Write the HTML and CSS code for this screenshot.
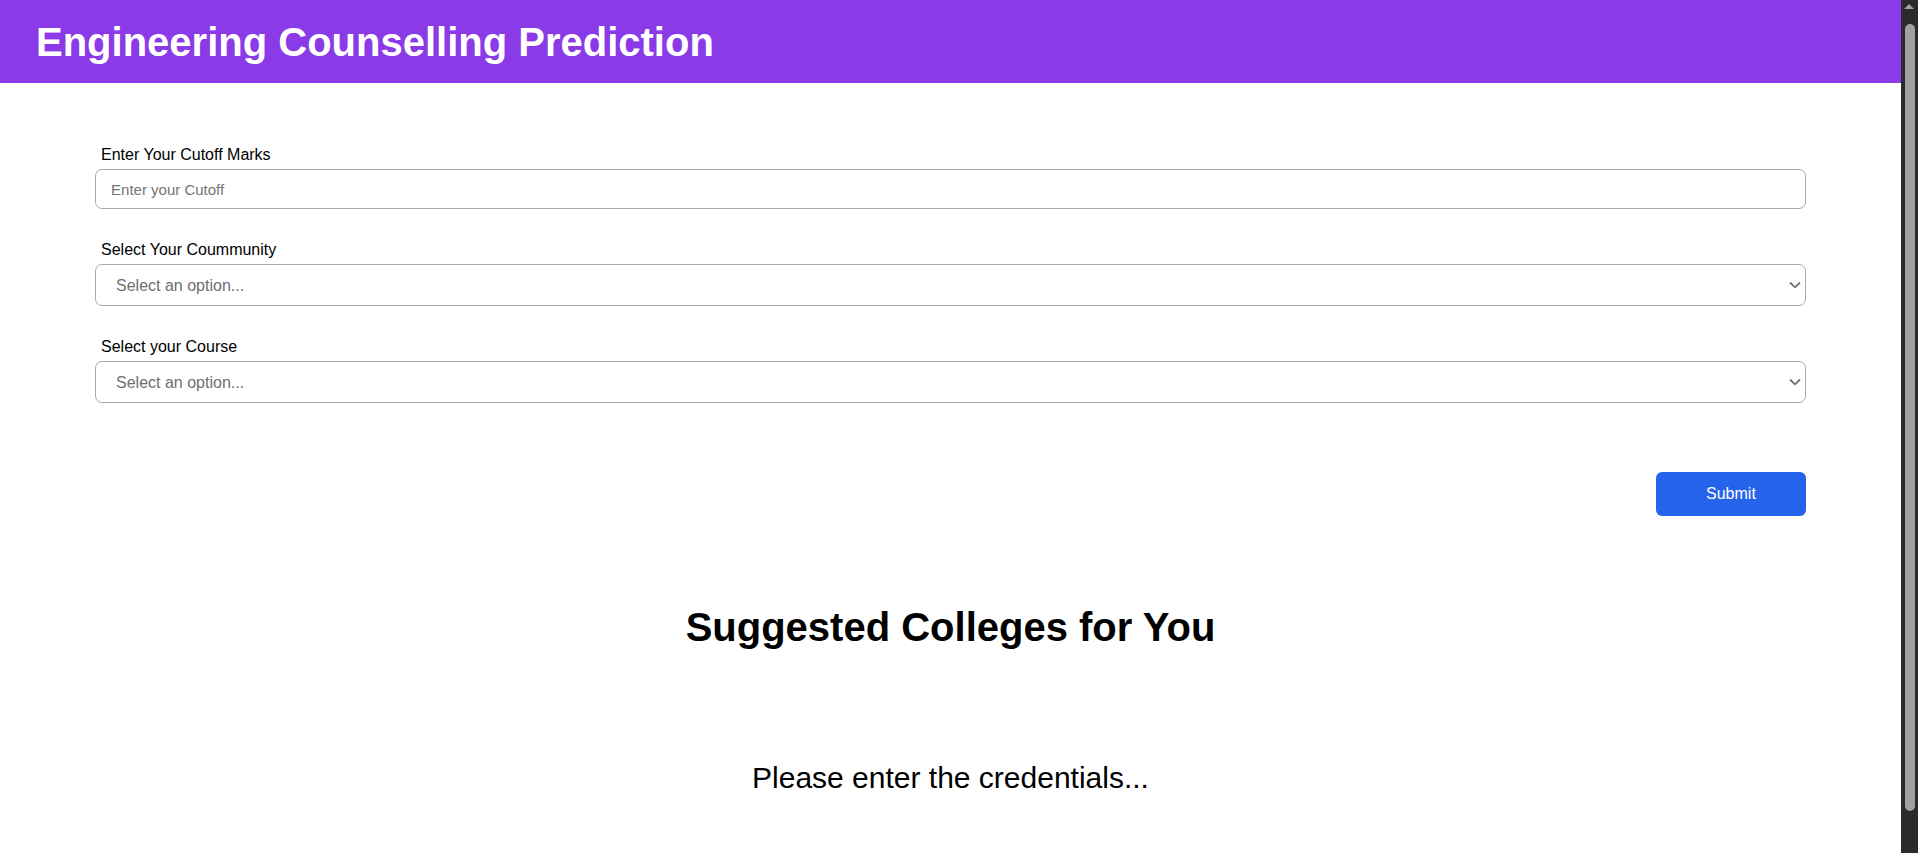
FILE: index.html
```html
<!DOCTYPE html>
<html lang="en">
<head>
<meta charset="utf-8">
<title>Engineering Counselling Prediction</title>
<link rel="stylesheet" href="styles.css">
</head>
<body>
  <header class="topbar">
    <h1 class="brand">Engineering Counselling Prediction</h1>
  </header>
  <main class="page">
    <form class="form">
      <div class="field">
        <label class="label" for="cutoff">Enter Your Cutoff Marks</label>
        <input class="control input" id="cutoff" type="text" placeholder="Enter your Cutoff">
      </div>
      <div class="field">
        <label class="label" for="community">Select Your Coummunity</label>
        <div class="select-wrap">
          <select class="control select" id="community">
            <option>Select an option...</option>
          </select>
          <svg class="chevron" width="12" height="8" viewBox="0 0 12 8" aria-hidden="true"><path d="M1 1.5 L6 6.3 L11 1.5" fill="none" stroke="#6e6e6e" stroke-width="1.8"/></svg>
        </div>
      </div>
      <div class="field">
        <label class="label" for="course">Select your Course</label>
        <div class="select-wrap">
          <select class="control select" id="course">
            <option>Select an option...</option>
          </select>
          <svg class="chevron" width="12" height="8" viewBox="0 0 12 8" aria-hidden="true"><path d="M1 1.5 L6 6.3 L11 1.5" fill="none" stroke="#6e6e6e" stroke-width="1.8"/></svg>
        </div>
      </div>
      <div class="actions">
        <button class="submit" type="button">Submit</button>
      </div>
    </form>
    <section class="results">
      <h2 class="results-title">Suggested Colleges for You</h2>
      <p class="results-msg">Please enter the credentials...</p>
    </section>
  </main>
  <div class="scrollbar" aria-hidden="true">
    <span class="scroll-arrow"></span>
    <span class="scroll-thumb"></span>
  </div>
</body>
</html>
```

FILE: styles.css
```css
body {
  margin: 0;
  padding-right: 17px;
  font-family: "Liberation Sans", Arial, Helvetica, sans-serif;
  color: #000;
  background: #fff;
}

.topbar {
  background: #8b3ae8;
  padding: 19px 36px 18px;
}
.brand {
  margin: 0;
  color: #fff;
  font-size: 40px;
  font-weight: 700;
  line-height: 46px;
}

.page {
  width: 90%;
  margin: 0 auto;
  padding: 63px 0 92px;
}

.form {
  display: flex;
  flex-direction: column;
}

.field {
  display: flex;
  flex-direction: column;
  gap: 5px;
  margin-bottom: 32px;
}

.label {
  padding-left: 6px;
  font-size: 16px;
  line-height: 18px;
}

.control {
  box-sizing: border-box;
  width: 100%;
  border: 1px solid #a9a9a9;
  border-radius: 7px;
  background: #fff;
  font-family: inherit;
  margin: 0;
}

.input {
  height: 40px;
  padding: 0 15px;
  font-size: 15px;
}
.input::placeholder {
  color: #757575;
}

.select-wrap {
  position: relative;
}
.select {
  display: block;
  height: 42px;
  padding: 0 30px 0 20px;
  font-size: 16px;
  color: #6f6f6f;
  appearance: none;
  -webkit-appearance: none;
}
.chevron {
  position: absolute;
  right: 5px;
  top: 17px;
  pointer-events: none;
}

.actions {
  display: flex;
  justify-content: flex-end;
  margin-top: 37px;
}

.submit {
  width: 150px;
  height: 44px;
  border: 0;
  border-radius: 6px;
  background: #2563eb;
  color: #fff;
  font-family: inherit;
  font-size: 16px;
}

.results {
  display: flex;
  flex-direction: column;
  align-items: center;
  padding-top: 88px;
}
.results-title {
  margin: 0;
  font-size: 40px;
  font-weight: 700;
  line-height: 46px;
}
.results-msg {
  margin: 111px 0 0;
  font-size: 30px;
  line-height: 34px;
}

.scrollbar {
  position: fixed;
  top: 0;
  right: 0;
  bottom: 0;
  width: 17px;
  background: #2b2b2b;
}
.scroll-arrow {
  position: absolute;
  top: 4px;
  left: 3px;
  width: 0;
  height: 0;
  border-left: 5px solid transparent;
  border-right: 5px solid transparent;
  border-bottom: 5px solid #a0a0a0;
}
.scroll-thumb {
  position: absolute;
  top: 24px;
  left: 4px;
  width: 10px;
  height: 787px;
  border-radius: 5px;
  background: #a0a0a0;
}
```
